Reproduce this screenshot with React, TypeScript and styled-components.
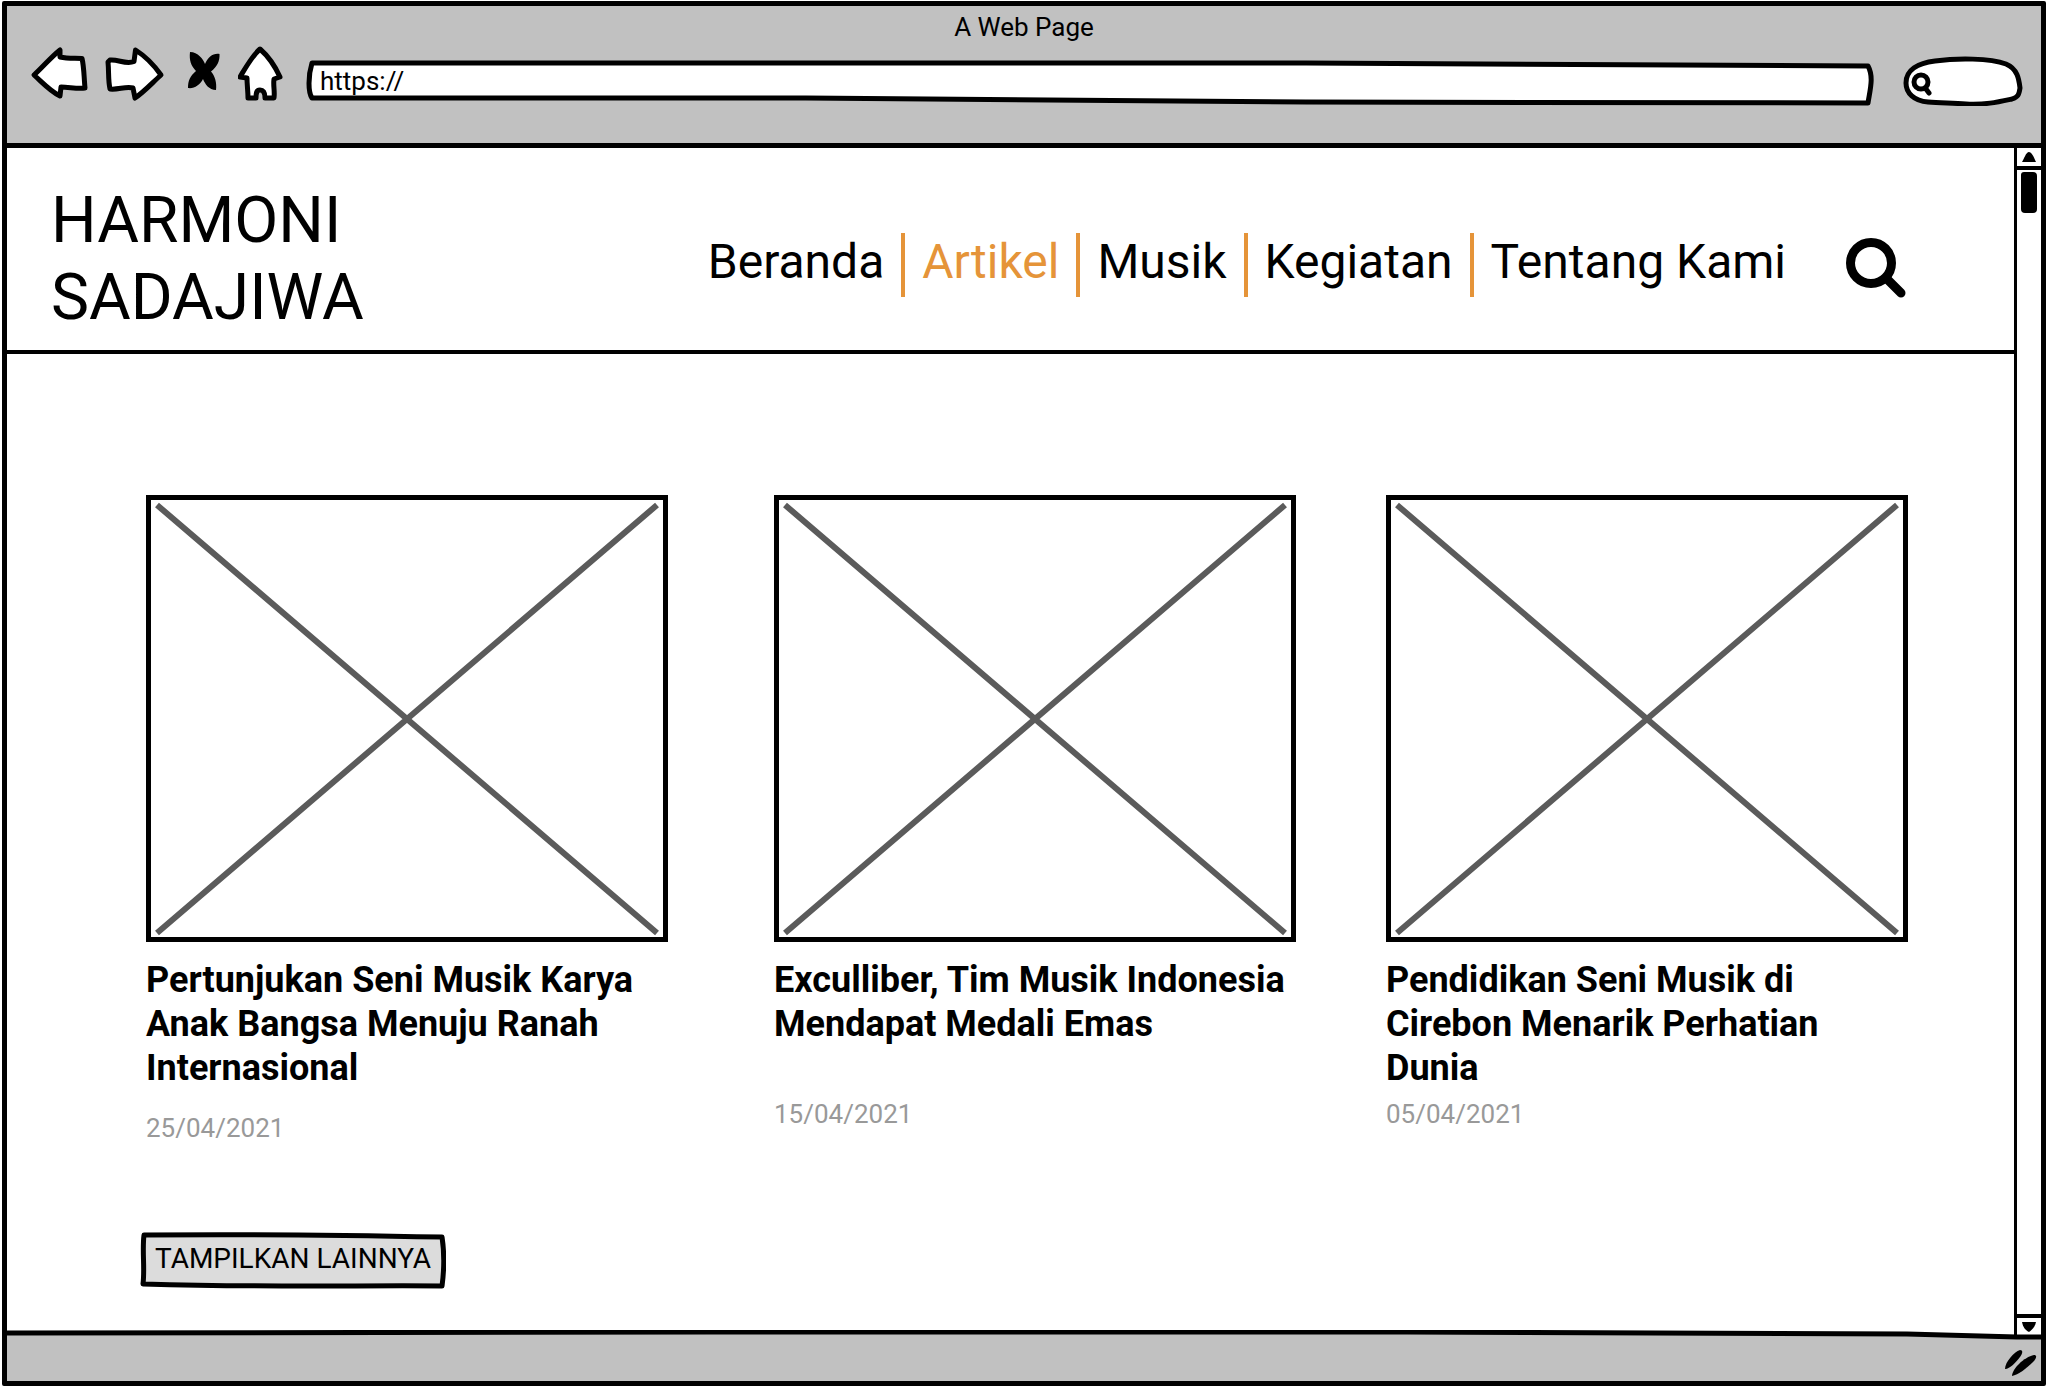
import React from "react";
import styled, { createGlobalStyle } from "styled-components";

const ink = "#000";
const chrome = "#c1c1c1";
const accent = "#e59439";

const GlobalStyle = createGlobalStyle`
  *, *::before, *::after { box-sizing: border-box; }
  body { margin: 0; background: #fff; }
  body, button, input { font-family: Roboto, "Noto Sans", sans-serif; color: ${ink}; }
`;

const Screen = styled.div`
  display: flex;
  min-height: 100vh;
  padding: 1px 2px 2px;
`;

const BrowserWindow = styled.div`
  display: flex;
  flex: 1;
  flex-direction: column;
  min-width: 0;
  border: 5px solid ${ink};
  border-radius: 2px;
  background: #fff;
`;

const Chrome = styled.div`
  padding-bottom: 37px;
  border-bottom: 5px solid ${ink};
  background: ${chrome};
`;

const WindowTitle = styled.div`
  height: 40px;
  font-size: 26px;
  line-height: 42px;
  text-align: center;
`;

const Toolbar = styled.div`
  display: flex;
  gap: 20px;
  height: 60px;
  padding: 0 17px 0 23px;
`;

const ToolGroup = styled.div`
  display: flex;
  gap: 12px;
`;

const BareButton = styled.button`
  display: block;
  flex: none;
  padding: 0;
  border: 0;
  background: none;
  cursor: pointer;

  svg { display: block; }
`;

const Outline = styled.svg`
  position: absolute;
  inset: 0;
  width: 100%;
  height: 100%;

  path { vector-effect: non-scaling-stroke; }
`;

const AddressField = styled.label`
  position: relative;
  flex: 1;
  margin-right: 8px;
`;

const AddressInput = styled.input`
  position: relative;
  width: 100%;
  height: 60px;
  padding: 9px 14px 0;
  border: 0;
  outline: 0;
  background: none;
  font-size: 26px;
`;

const SearchField = styled.label`
  position: relative;
  width: 122px;
`;

const SearchInput = styled.input`
  position: relative;
  width: 100%;
  height: 60px;
  padding: 8px 14px 0 36px;
  border: 0;
  outline: 0;
  background: none;
  font-size: 26px;
`;

const Viewport = styled.div`
  display: grid;
  flex: 1;
  grid-template-columns: minmax(0, 1fr) 27px;
`;

const Page = styled.div`
  min-width: 0;
`;

const Header = styled.header`
  display: flex;
  align-items: center;
  padding: 34px 108px 14px 44px;
  border-bottom: 4px solid ${ink};
`;

const Brand = styled.h1`
  width: 340px;
  margin: 0 auto 0 0;
  font-size: 64px;
  font-weight: 400;
  line-height: 77px;
`;

const Nav = styled.nav`
  display: flex;
  margin: 12px 60px 0 0;
`;

const NavLink = styled.a<{ $active?: boolean }>`
  height: 64px;
  padding: 0 17px;
  color: ${(p) => (p.$active ? accent : ink)};
  font-size: 48px;
  line-height: 58px;
  text-decoration: none;
  white-space: nowrap;

  & + & { border-left: 4px solid ${accent}; }
  &:last-child { padding-right: 0; }
`;

const HeaderSearch = styled(BareButton)`
  margin-top: 17px;
`;

const Articles = styled.main`
  display: grid;
  grid-template-columns: 628fr 612fr 522fr;
  padding: 141px 106px 0 139px;
`;

const Card = styled.article`
  max-width: 522px;
`;

const Placeholder = styled.div`
  aspect-ratio: 522 / 447;
  border: 5px solid ${ink};

  svg { display: block; width: 100%; height: 100%; }
`;

const CardTitle = styled.h2`
  min-height: 132px;
  margin: 16px 0 0;
  font-size: 36px;
  font-weight: 700;
  line-height: 44px;
`;

const CardDate = styled.time<{ $spaced?: boolean }>`
  display: block;
  margin-top: ${(p) => (p.$spaced ? 22 : 8)}px;
  color: #999;
  font-size: 26px;
  line-height: 32px;
`;

const Actions = styled.div`
  padding: 88px 106px 41px 133px;
`;

const MoreButton = styled.button`
  position: relative;
  height: 57px;
  padding: 0 15px 4px;
  border: 0;
  background: none;
  font-size: 28px;
  cursor: pointer;
`;

const ButtonText = styled.span`
  position: relative;
`;

const Scrollbar = styled.div`
  display: flex;
  flex-direction: column;
  align-items: center;
  border-left: 3px solid ${ink};
`;

const ScrollButton = styled.button<{ $end?: boolean }>`
  display: flex;
  align-items: center;
  justify-content: center;
  width: 100%;
  height: 22px;
  padding: 0;
  border: 0 solid ${ink};
  border-width: ${(p) => (p.$end ? "4px 0 0" : "0 0 4px")};
  margin-top: ${(p) => (p.$end ? "auto" : "0")};
  background: #fff;
`;

const Thumb = styled.div`
  width: 16px;
  height: 41px;
  margin-top: 2px;
  border-radius: 3px 4px 4px 4px;
  background: ${ink};
`;

const StatusBar = styled.footer`
  position: relative;
  display: flex;
  align-items: flex-end;
  justify-content: flex-end;
  height: 45px;
  padding: 0 3px 3px 0;
  background: ${chrome};
`;

const StatusEdge = styled.svg`
  position: absolute;
  top: -6px;
  left: 0;
  width: 100%;
  height: 10px;

  path { vector-effect: non-scaling-stroke; }
`;

const line = {
  stroke: ink,
  strokeWidth: 5,
  strokeLinecap: "round" as const,
  strokeLinejoin: "round" as const,
};

const BackIcon = () => (
  <svg width="62" height="60" viewBox="30 46 62 60" aria-hidden="true">
    <path {...line} fill="#fff" d="M34 75C43 67 50 58 60 50L60 57C68 59 75 58 82 58.500C84 66 84 78 85 88C77 89 69 87 61 87L60 96C50 91 43 83 34 75Z" />
  </svg>
);

const ForwardIcon = () => (
  <svg width="62" height="60" viewBox="104 46 62 60" aria-hidden="true">
    <path {...line} fill="#fff" d="M110 60C118 59 126 65 134 61.500L135.500 50C145 56 154 65 161 75C152 83 144 92 135 98L133 88C126 86 118 90 110 89C108 80 109 72 108 62Z" />
  </svg>
);

const StopIcon = () => (
  <svg width="48" height="60" viewBox="178 46 48 60" aria-hidden="true">
    <path fill={ink} d="M190 52C198 52 203 59 205 64C208 57 213 53 219.500 54C220 61 217 67 211 71.500C215 76 217 83 216 90C209 90 205 84 203 79C200 85 194 89 188 88C188 81 190 76 196 71C191 66 189 60 190 52Z" />
  </svg>
);

const HomeIcon = () => (
  <svg width="48" height="60" viewBox="238 46 48 60" aria-hidden="true">
    <path {...line} fill="#fff" d="M260 49C268 56 275 66 280 77L274 79C273 86 275 91 274 98L265 98C265 94 264 90 260 90C256 90 256 94 256 98L248 98C248 91 247 85 247 78L240 77C246 67 252 56 260 49Z" />
  </svg>
);

const SearchIcon = () => (
  <svg width="60" height="60" viewBox="0 0 60 60" fill="none" stroke={ink} aria-hidden="true">
    <circle cx="25" cy="25" r="20.500" strokeWidth="9" />
    <path d="M40 40L55 55" strokeWidth="9" strokeLinecap="round" />
  </svg>
);

const CrossedBox = () => (
  <svg viewBox="0 0 512 437" preserveAspectRatio="none" aria-hidden="true">
    <path d="M6 5L506 433M506 5L6 433" stroke="#5b5b5b" strokeWidth="6" fill="none" />
  </svg>
);

const links = ["Beranda", "Artikel", "Musik", "Kegiatan", "Tentang Kami"];

const articles = [
  { title: "Pertunjukan Seni Musik Karya Anak Bangsa Menuju Ranah Internasional", date: "25/04/2021", iso: "2021-04-25", spaced: true },
  { title: "Exculliber, Tim Musik Indonesia Mendapat Medali Emas", date: "15/04/2021", iso: "2021-04-15" },
  { title: "Pendidikan Seni Musik di Cirebon Menarik Perhatian Dunia", date: "05/04/2021", iso: "2021-04-05" },
];

export default function App() {
  return (
    <Screen>
      <GlobalStyle />
      <BrowserWindow>
        <Chrome>
          <WindowTitle>A Web Page</WindowTitle>
          <Toolbar>
            <ToolGroup>
              <BareButton type="button" aria-label="Back"><BackIcon /></BareButton>
              <BareButton type="button" aria-label="Forward"><ForwardIcon /></BareButton>
              <BareButton type="button" aria-label="Stop"><StopIcon /></BareButton>
              <BareButton type="button" aria-label="Home"><HomeIcon /></BareButton>
            </ToolGroup>
            <AddressField>
              <Outline viewBox="0 0 1568 60" preserveAspectRatio="none" aria-hidden="true">
                <path {...line} fill="#fff" d="M6 17L1000 17L1562 20C1568 31 1564 44 1562 57L1000 56L500 52L6 52C2 46 2 30 6 17Z" />
              </Outline>
              <AddressInput aria-label="Address" defaultValue="https://" />
            </AddressField>
            <SearchField>
              <Outline viewBox="1902 46 122 60" preserveAspectRatio="none" aria-hidden="true">
                <path {...line} fill="#fff" d="M1906 83C1906 70 1918 63 1935 61C1957 58 1990 58 2006 64C2018 69 2019 80 2020 88C2019 95 2018 97 2012 99C1998 102 1985 105 1966 104C1952 103 1940 103 1928 102C1914 101 1906 93 1906 83Z" />
                <circle cx="1921" cy="82" r="7" fill="none" stroke={ink} strokeWidth="5" />
                <path {...line} fill="none" d="M1926 89L1929 93" />
              </Outline>
              <SearchInput type="search" aria-label="Search the web" />
            </SearchField>
          </Toolbar>
        </Chrome>

        <Viewport>
          <Page>
            <Header>
              <Brand>HARMONI SADAJIWA</Brand>
              <Nav>
                {links.map((name) => (
                  <NavLink key={name} href="#" $active={name === "Artikel"}>{name}</NavLink>
                ))}
              </Nav>
              <HeaderSearch type="button" aria-label="Cari"><SearchIcon /></HeaderSearch>
            </Header>
            <Articles>
              {articles.map((a) => (
                <Card key={a.iso}>
                  <Placeholder><CrossedBox /></Placeholder>
                  <CardTitle>{a.title}</CardTitle>
                  <CardDate dateTime={a.iso} $spaced={a.spaced}>{a.date}</CardDate>
                </Card>
              ))}
            </Articles>
            <Actions>
              <MoreButton type="button">
                <Outline viewBox="0 0 306 56" preserveAspectRatio="none" aria-hidden="true">
                  <path {...line} fill="#dcdcdc" d="M4 3C100 2 200 3 302 5C304 18 304 38 302 53C220 52 150 55 3 51C5 36 2 18 4 3Z" />
                </Outline>
                <ButtonText>TAMPILKAN LAINNYA</ButtonText>
              </MoreButton>
            </Actions>
          </Page>
          <Scrollbar>
            <ScrollButton type="button" aria-label="Scroll up">
              <svg width="14" height="10" viewBox="0 0 14 10" aria-hidden="true">
                <path d="M0 10C2 7 4 0 7 0C10 0 12 6 14 10Z" />
              </svg>
            </ScrollButton>
            <Thumb />
            <ScrollButton type="button" aria-label="Scroll down" $end>
              <svg width="14" height="10" viewBox="0 0 14 10" aria-hidden="true">
                <path d="M0 0H14C13 5 10 8 7 10C3 8 1 5 0 0Z" />
              </svg>
            </ScrollButton>
          </Scrollbar>
        </Viewport>

        <StatusBar>
          <StatusEdge viewBox="0 0 2034 10" preserveAspectRatio="none" aria-hidden="true">
            <path fill={chrome} d="M0 3L700 2L1400 2L1900 4L2010 7L2034 7V10H0Z" />
            <path {...line} fill="none" d="M0 3L700 2L1400 2L1900 4L2010 7L2034 7" />
          </StatusEdge>
          <svg width="34" height="30" viewBox="0 0 34 30" aria-hidden="true">
            <path d="M1 21C1 14 10 4 16 2C19 2 19 5 16 9C12 14 6 21 1 21Z" />
            <path d="M8 28C8 21 20 9 30 7C33 7 33 10 29 14C23 20 14 27 8 28Z" />
          </svg>
        </StatusBar>
      </BrowserWindow>
    </Screen>
  );
}
